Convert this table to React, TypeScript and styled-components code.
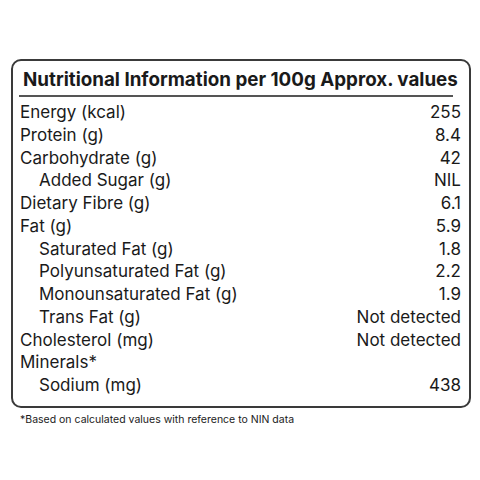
import React from 'react'
import styled, { createGlobalStyle } from 'styled-components'

const GlobalStyle = createGlobalStyle`
  body {
    margin: 0;
    background: #fff;
    font-family: Inter, "Liberation Sans", sans-serif;
    color: #1a1a1a;
  }
`

const Page = styled.div`
  width: 480px;
  height: 480px;
  padding: 59px 0 0 11px;
  box-sizing: border-box;
`

const Card = styled.div`
  width: 460px;
  height: 349px;
  box-sizing: border-box;
  border: 2px solid #3a3a3a;
  border-radius: 10px;
  padding: 6px 8px 0 7px;
`

const Title = styled.h1`
  margin: 0 0 0 3px;
  font-size: 18.8px;
  font-weight: 700;
  line-height: 26px;
  letter-spacing: 0;
  white-space: nowrap;
`

const Rule = styled.div`
  height: 2px;
  background: #555;
  margin: 2px 8px 4px -1px;
`

const Table = styled.div`
  display: flex;
  flex-direction: column;
`

const Row = styled.div<{ $sub?: boolean }>`
  display: flex;
  justify-content: space-between;
  align-items: baseline;
  height: 22.75px;
  line-height: 22.75px;
  font-size: 17px;
  padding-left: ${({ $sub }) => ($sub ? '19px' : '0')};
`

const Footnote = styled.p`
  margin: 5px 0 0 9px;
  font-size: 10.5px;
  line-height: 14px;
`

type Item = { label: string; value?: string; sub?: boolean }

const items: Item[] = [
  { label: 'Energy (kcal)', value: '255' },
  { label: 'Protein (g)', value: '8.4' },
  { label: 'Carbohydrate (g)', value: '42' },
  { label: 'Added Sugar (g)', value: 'NIL', sub: true },
  { label: 'Dietary Fibre (g)', value: '6.1' },
  { label: 'Fat (g)', value: '5.9' },
  { label: 'Saturated Fat (g)', value: '1.8', sub: true },
  { label: 'Polyunsaturated Fat (g)', value: '2.2', sub: true },
  { label: 'Monounsaturated Fat (g)', value: '1.9', sub: true },
  { label: 'Trans Fat (g)', value: 'Not detected', sub: true },
  { label: 'Cholesterol (mg)', value: 'Not detected' },
  { label: 'Minerals*' },
  { label: 'Sodium (mg)', value: '438', sub: true },
]

const App = () => (
  <Page>
    <GlobalStyle />
    <Card>
      <Title>Nutritional Information per 100g Approx. values</Title>
      <Rule />
      <Table>
        {items.map((it) => (
          <Row key={it.label} $sub={it.sub}>
            <span>{it.label}</span>
            <span>{it.value}</span>
          </Row>
        ))}
      </Table>
    </Card>
    <Footnote>*Based on calculated values with reference to NIN data</Footnote>
  </Page>
)

export default App
